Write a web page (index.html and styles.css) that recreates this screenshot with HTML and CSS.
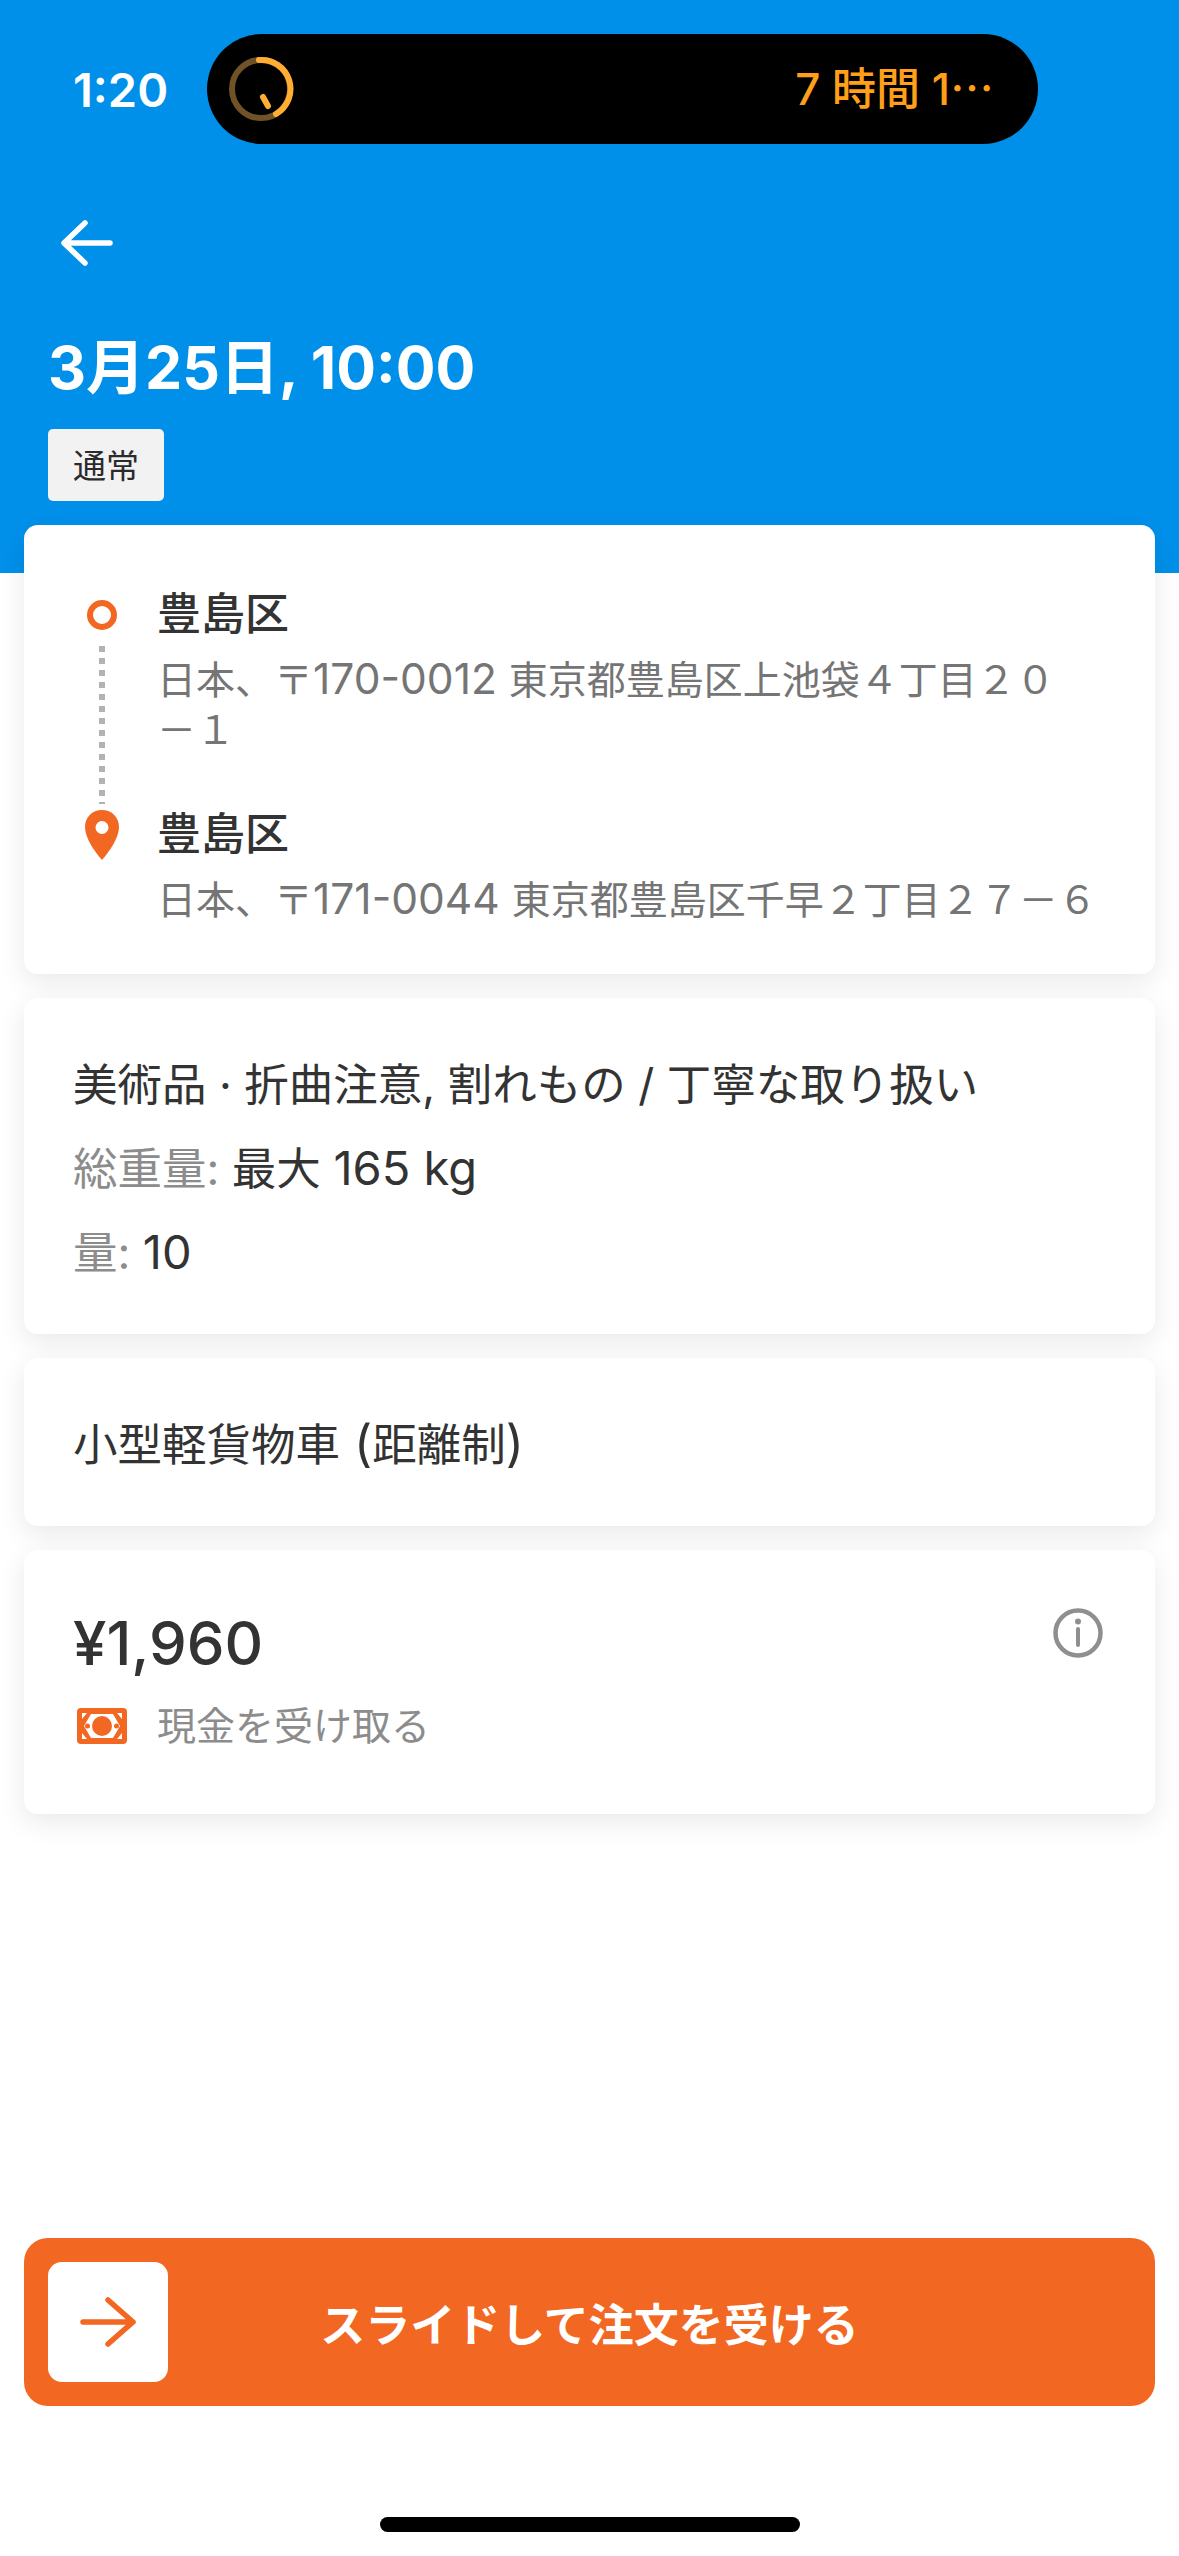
FILE: index.html
```html
<!DOCTYPE html>
<html lang="ja">
<head>
<meta charset="utf-8">
<title>注文</title>
<link rel="stylesheet" href="styles.css">
</head>
<body>
<div class="app">
  <header class="header">
    <div class="status">
      <span class="time">1:20</span>
      <div class="island">
        <svg class="ring" width="66" height="66" viewBox="0 0 66 66">
          <circle cx="33" cy="33" r="29" fill="none" stroke="#6f5228" stroke-width="6"/>
          <path d="M31 4 A29 29 0 0 1 48 58" fill="none" stroke="#ffad33" stroke-width="6" stroke-linecap="round"/>
          <path d="M35 41 L40 50" fill="none" stroke="#ffad33" stroke-width="6" stroke-linecap="round"/>
        </svg>
        <span class="timer">7 時間 1<span class="ellipsis">…</span></span>
      </div>
    </div>
    <svg class="back" width="52" height="46" viewBox="0 0 52 46">
      <path d="M49 23 H4 M24 3 L3 23 L24 43" fill="none" stroke="#fff" stroke-width="5.5" stroke-linecap="round" stroke-linejoin="round"/>
    </svg>
    <h1 class="title">3月25日, 10:00</h1>
    <span class="tag">通常</span>
  </header>

  <main class="cards">
    <section class="card route">
      <div class="route-row">
        <div class="marker">
          <span class="origin"></span>
          <span class="dots"></span>
        </div>
        <div class="place place-first">
          <div class="name">豊島区</div>
          <div class="addr">日本、〒<span class="zip">170-0012 </span>東京都豊島区上池袋４丁目２０<br>－１</div>
        </div>
      </div>
      <div class="route-row">
        <div class="marker">
          <svg class="pin" width="34" height="50" viewBox="0 0 34 50">
            <path fill-rule="evenodd" fill="#f26722" d="M17 0 C7 0 0 7.500 0 17 C0 28 10 42 17 50 C24 42 34 28 34 17 C34 7.500 27 0 17 0 Z M17 11 A6.500 6.500 0 1 1 17 24 A6.500 6.500 0 1 1 17 11 Z"/>
          </svg>
        </div>
        <div class="place">
          <div class="name">豊島区</div>
          <div class="addr">日本、〒<span class="zip">171-0044 </span>東京都豊島区千早２丁目２７－６</div>
        </div>
      </div>
    </section>

    <section class="card goods">
      <div class="line">美術品 · 折曲注意, 割れもの / 丁寧な取り扱い</div>
      <div class="line"><span class="muted">総重量:</span> 最大 <span class="num">165 kg</span></div>
      <div class="line"><span class="muted">量:</span> <span class="num">10</span></div>
    </section>

    <section class="card vehicle">
      <div class="line">小型軽貨物車<span class="paren"> (</span>距離制<span class="paren">)</span></div>
    </section>

    <section class="card price">
      <div class="price-main">
        <div class="amount">¥1,960</div>
        <div class="pay">
          <svg class="cash" width="50" height="36" viewBox="0 0 50 36">
            <rect width="50" height="36" rx="4" fill="#f26722"/>
            <path d="M14 6 H36 L43 18 L36 30 H14 L7 18 Z" fill="#fff"/>
            <circle cx="25" cy="18" r="10" fill="#f26722"/>
            <circle cx="10.500" cy="18" r="2.500" fill="#f26722"/>
            <circle cx="39.500" cy="18" r="2.500" fill="#f26722"/>
            <path d="M5 5 H10 L5 11 Z M45 5 H40 L45 11 Z M5 31 H10 L5 25 Z M45 31 H40 L45 25 Z" fill="#fff"/>
          </svg>
          <span>現金を受け取る</span>
        </div>
      </div>
      <svg class="info" width="50" height="50" viewBox="0 0 50 50">
        <circle cx="25" cy="25" r="22.500" fill="none" stroke="#8f8f8f" stroke-width="4.500"/>
        <circle cx="25" cy="13.500" r="3" fill="#8f8f8f"/>
        <path d="M25 21 V37" stroke="#8f8f8f" stroke-width="4" stroke-linecap="round"/>
      </svg>
    </section>
  </main>

  <div class="slider">
    <div class="knob">
      <svg width="56" height="50" viewBox="0 0 56 50">
        <path d="M3 25 H53 M28 3 L53 25 L28 47" fill="none" stroke="#f26722" stroke-width="5.500" stroke-linecap="round" stroke-linejoin="round"/>
      </svg>
    </div>
    <span class="slide-text">スライドして注文を受ける</span>
  </div>
  <div class="home"><span class="home-bar"></span></div>
</div>
</body>
</html>
```
FILE: styles.css
```css
* { box-sizing: border-box; }
html, body { margin: 0; padding: 0; background: #fff; }
body {
  font-family: Inter, "Noto Sans CJK JP", sans-serif;
  color: #333;
}
.app {
  width: 1179px;
  height: 2556px;
  display: flex;
  flex-direction: column;
  overflow: hidden;
}
.header {
  height: 573px;
  background: #0090ea;
  padding: 34px 0 0 48px;
  display: flex;
  flex-direction: column;
  align-items: flex-start;
  flex: none;
}
.status {
  display: flex;
  align-items: center;
  height: 110px;
  margin-left: 25px;
}
.time {
  width: 134px;
  font-size: 47px;
  font-weight: 600;
  color: #fff;
  line-height: 1;
}
.island {
  width: 831px;
  height: 110px;
  border-radius: 55px;
  background: #000;
  display: flex;
  align-items: center;
  justify-content: space-between;
  padding: 0 44px 0 21px;
}
.timer {
  color: #ff9f1a;
  font-size: 44px;
  line-height: 50px;
  font-weight: 500;
  margin-top: -4px;
}
.ellipsis { font-family: "Noto Sans CJK JP", sans-serif; }
.back { margin: 76px 0 0 13px; display: block; }
.title {
  margin: 67px 0 0;
  font-size: 59px;
  line-height: 70px;
  font-weight: 700;
  color: #fff;
  letter-spacing: 0;
}
.tag {
  margin-top: 26px;
  width: 116px;
  height: 72px;
  padding-bottom: 2px;
  border-radius: 5px;
  background: #f2f2f2;
  color: #2b2b2b;
  font-size: 33px;
  display: flex;
  align-items: center;
  justify-content: center;
}
.cards {
  margin-top: -48px;
  padding: 0 24px;
  display: flex;
  flex-direction: column;
  gap: 24px;
  flex: none;
}
.card {
  background: #fff;
  border-radius: 14px;
  box-shadow: 0 8px 28px rgba(0, 0, 0, 0.09);
}
.route { height: 449px; padding: 64px 0 0 61px; }
.route-row { display: flex; gap: 38px; }
.marker {
  width: 34px;
  display: flex;
  flex-direction: column;
  align-items: center;
  flex: none;
}
.origin {
  width: 30px;
  height: 30px;
  margin-top: 11px;
  border: 6px solid #f26722;
  border-radius: 50%;
  flex: none;
}
.dots {
  width: 6px;
  height: 158px;
  margin-top: 16px;
  background: repeating-linear-gradient(to bottom, #b3b3b3 0 6px, transparent 6px 12px);
}
.pin { display: block; margin-top: 1px; }
.place { min-width: 0; }
.place-first { height: 220px; }
.name {
  font-size: 44px;
  line-height: 50px;
  font-weight: 500;
  color: #333;
}
.addr {
  margin-top: 16px;
  font-size: 39px;
  line-height: 50px;
  color: #757575;
  white-space: nowrap;
}
.zip { font-size: 42.5px; line-height: 1; }
.goods { height: 336px; padding: 45px 49px 0; }
.line {
  font-size: 44.5px;
  line-height: 84px;
  color: #333;
}
.num { font-size: 47px; line-height: 1; }
.paren { font-size: 50px; line-height: 1; }
.muted { color: #8c8c8c; }
.vehicle { height: 168px; padding: 45px 49px 0; }
.price {
  height: 264px;
  padding: 58px 52px 0 49px;
  display: flex;
  justify-content: space-between;
  align-items: flex-start;
}
.amount {
  font-size: 60px;
  line-height: 70px;
  font-weight: 500;
  color: #333;
}
.pay {
  margin-top: 23px;
  display: flex;
  align-items: center;
  gap: 30px;
  font-size: 39px;
  line-height: 50px;
  color: #8c8c8c;
  margin-left: 4px;
}
.info { display: block; margin-top: 0; }
.slider {
  margin: auto 24px 0;
  height: 168px;
  border-radius: 24px;
  background: #f26722;
  position: relative;
  display: flex;
  align-items: center;
  justify-content: center;
  flex: none;
}
.knob {
  position: absolute;
  left: 24px;
  top: 24px;
  width: 120px;
  height: 120px;
  border-radius: 14px;
  background: #fff;
  display: flex;
  align-items: center;
  justify-content: center;
}
.slide-text {
  font-size: 45px;
  font-weight: 700;
  color: #fff;
}
.home {
  height: 150px;
  padding-top: 111px;
  display: flex;
  justify-content: center;
  flex: none;
}
.home-bar {
  width: 420px;
  height: 15px;
  border-radius: 8px;
  background: #000;
}
```
